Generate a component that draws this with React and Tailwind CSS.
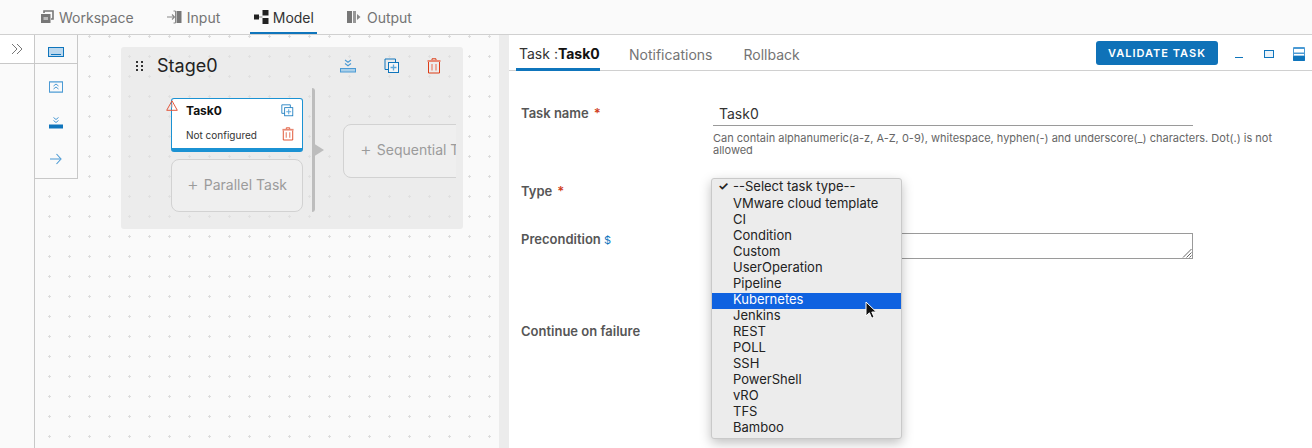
const FONT = "font-['Inter','Liberation_Sans',sans-serif]";

function DupIcon({ className = "" }) {
  return (
    <svg viewBox="0 0 16 16" className={className} fill="none">
      <path d="M4.5 11.5H1V1h10.5v3.5" stroke="#0f75bc" strokeWidth="1" transform="translate(0 0)" />
      <rect x="4.5" y="4.5" width="10" height="10" fill="#fff" fillOpacity="0.5" stroke="#0f75bc" strokeWidth="1" />
      <path d="M9.5 6.5v6M6.5 9.5h6" stroke="#5da7da" strokeWidth="1.3" />
    </svg>
  );
}
function TrashIcon({ className = "" }) {
  return (
    <svg viewBox="0 0 14 16" className={className} fill="none">
      <path d="M0.5 3h13" stroke="#e88873" strokeWidth="2" />
      <path d="M5 2V0.8h4V2" stroke="#dc3c16" strokeWidth="1" />
      <path d="M1.5 4v11h11V4" stroke="#dc3c16" strokeWidth="1" />
      <path d="M5 6v6.5M9 6v6.5" stroke="#eb9a87" strokeWidth="1.6" />
    </svg>
  );
}
function DownBarIcon({ className = "" }) {
  return (
    <svg viewBox="0 0 16 14" className={className} fill="none">
      <path d="M5 1l3 2.2L11 1M5 4.5l3 2.2 3-2.2" stroke="#4b9ad4" strokeWidth="1.1" />
      <rect x="0.5" y="9.5" width="15" height="3.5" fill="#a9cfe9" stroke="#4b9ad4" strokeWidth="1" />
    </svg>
  );
}
function WorkspaceIcon() {
  return (
    <svg viewBox="0 0 14 14" className="h-[14px] w-[14px]" fill="none">
      <path d="M4 3V1h9v8h-2" stroke="#777" strokeWidth="1.6" />
      <rect x="1" y="4" width="9.5" height="9" fill="#777" />
      <rect x="3.5" y="7" width="4.5" height="3" fill="#bbb" />
    </svg>
  );
}
function InputIcon() {
  return (
    <svg viewBox="0 0 15 14" className="h-[14px] w-[15px]" fill="none">
      <path d="M0 7h7M5 4.5L7.5 7 5 9.5" stroke="#888" strokeWidth="1.1" />
      <path d="M6.5 1h2v12h-2" stroke="#888" strokeWidth="1" />
      <rect x="9.5" y="1" width="5" height="12" fill="#777" />
    </svg>
  );
}
function ModelIcon() {
  return (
    <svg viewBox="0 0 15 14" className="h-[14px] w-[15px]" fill="#222">
      <rect x="0" y="4.5" width="5" height="5" />
      <rect x="8.5" y="0" width="6" height="5.5" />
      <rect x="8.5" y="8" width="6" height="6" />
      <path d="M5 7h3.5" stroke="#888" />
    </svg>
  );
}
function OutputIcon() {
  return (
    <svg viewBox="0 0 15 14" className="h-[14px] w-[15px]" fill="none">
      <rect x="0" y="1" width="5" height="12" fill="#777" />
      <rect x="6" y="1" width="3" height="12" fill="#999" />
      <path d="M10 4l3.5 3L10 10z" fill="#888" />
    </svg>
  );
}

function TopTab({ icon, label, active, className = "" }) {
  return (
    <div
      className={`flex h-[34px] items-center border-b-[2px] pt-[2px] text-[14px] ${
        active ? "border-[#0f75bc] text-[#333]" : "border-transparent text-[#747474]"
      } ${className}`}
    >
      {icon}
      <span>{label}</span>
    </div>
  );
}

const OPTIONS = [
  "VMware cloud template", "CI", "Condition", "Custom", "UserOperation", "Pipeline",
  "Kubernetes", "Jenkins", "REST", "POLL", "SSH", "PowerShell", "vRO", "TFS", "Bamboo",
];

function Dropdown() {
  return (
    <div className="absolute left-[711px] top-[178px] z-20 w-[191px] rounded-[3px] border border-[#c9c9c9] bg-[#ececec] pt-[2px] pb-[1px] text-[13px] leading-[12px] text-[#222] shadow-[0_4px_12px_rgba(0,0,0,0.25)]">
      <div className="relative -mt-[1px] h-[17px] pl-[21px]">
        <span className="absolute left-[6px] top-0 text-[12px] font-bold">✓</span>
        --Select task type--
      </div>
      {OPTIONS.map((o) => (
        <div key={o} className={`h-[16px] pl-[21px] ${o === "Kubernetes" ? "bg-[#0f62e0] text-white" : ""}`}>
          {o}
        </div>
      ))}
      <svg viewBox="0 0 12 19" className="absolute left-[153px] top-[122px] h-[19px] w-[12px]">
        <path d="M1 1v14l3.4-3.2 2.3 5.4 2.4-1-2.3-5.2h4.6z" fill="#111" stroke="#fff" strokeWidth="1" />
      </svg>
    </div>
  );
}

function Canvas() {
  return (
    <div className="flex w-[464px] shrink-0 items-start bg-[#fafafa] bg-[radial-gradient(circle_at_14.5px_1.5px,#dcdcdc_1.2px,transparent_1.4px)] bg-[length:20px_20px]">
      <div className="h-[144px] w-[43px] shrink-0 border-r border-b border-[#c8c8c8] bg-[#fafafa]">
        <div className="flex h-[29px] items-center justify-center border-b border-[#c8c8c8] pt-[5px]">
          <svg viewBox="0 0 16 10" className="h-[10px] w-[16px]" fill="none">
            <rect x="0.5" y="0.5" width="15" height="9" fill="#bcd8ee" stroke="#0f75bc" />
            <path d="M3 7.5h10" stroke="#0f75bc" />
          </svg>
        </div>
        <div className="flex flex-col items-center gap-[24px] pt-[17px]">
          <svg viewBox="0 0 14 12" className="h-[12px] w-[14px]" fill="none">
            <path d="M0 0.5h14M0 11.5h14" stroke="#a9cfe9" />
            <rect x="0.5" y="1" width="13" height="10" stroke="#4b9ad4" />
            <path d="M4.5 5l2.5-2 2.5 2M4.5 8l2.5-2 2.5 2" stroke="#4b9ad4" />
          </svg>
          <svg viewBox="0 0 14 12" className="h-[12px] w-[14px]" fill="none">
            <path d="M4.5 0.5L7 2.5l2.5-2M4.5 3.5L7 5.5l2.5-2" stroke="#4b9ad4" />
            <rect x="0" y="7.5" width="14" height="4" fill="#0f75bc" />
          </svg>
          <svg viewBox="0 0 12 12" className="h-[12px] w-[12px]" fill="none">
            <path d="M0 6h10" stroke="#7ab4de" strokeWidth="1.4" />
            <path d="M6.5 1L11 6l-4.5 5" stroke="#4b9ad4" strokeWidth="1.1" />
          </svg>
        </div>
      </div>
      <div className="mt-[12px] ml-[43px] h-[182px] w-[342px] shrink-0 rounded-[3px] bg-[#e3e3e3]/60">
        <div className="flex h-[38px] items-center pl-[15px]">
          <div className="grid w-[8px] grid-cols-2 gap-[2px]">
            {[0, 1, 2, 3, 4, 5].map((i) => (
              <span key={i} className="h-[2px] w-[2px] bg-[#333]" />
            ))}
          </div>
          <span className="ml-[13px] -mt-[1px] text-[18px] text-[#222]">Stage0</span>
          <DownBarIcon className="ml-[122px] h-[14px] w-[16px]" />
          <DupIcon className="ml-[28px] h-[16px] w-[16px]" />
          <TrashIcon className="ml-[27px] h-[16px] w-[14px]" />
        </div>
        <div className="flex w-[335px] overflow-hidden pl-[50px] pt-[3px]">
          <div className="flex w-[132px] shrink-0 flex-col gap-[7px] pt-[10px]">
            <div className="relative h-[54px] rounded-[3px] border border-b-[4px] border-[#1b92d3] bg-white pl-[14px]">
              <svg viewBox="0 0 12 11" className="absolute -left-[6px] top-[1px] h-[11px] w-[12px]" fill="none">
                <path d="M6 0.8L11.3 10.3H0.7z" stroke="#e2573c" strokeWidth="1" />
                <path d="M6 3.5v4" stroke="#f0a090" />
              </svg>
              <div className="pt-[3px] text-[12px] font-bold leading-[18px] text-[#111]">Task0</div>
              <div className="mt-[8px] text-[10px] leading-[14px] text-[#333]">Not configured</div>
              <DupIcon className="absolute right-[8px] top-[5px] h-[13px] w-[13px]" />
              <TrashIcon className="absolute right-[8px] top-[28px] h-[14px] w-[12px]" />
            </div>
            <div className="flex h-[53px] items-center justify-center gap-[5px] rounded-[8px] border border-[#d2d2d2] bg-[#efefef] pb-[2px] text-[14px] text-[#9b9b9b]">
              <span className="text-[18px] font-light">+</span>
              <span>Parallel Task</span>
            </div>
          </div>
          <div className="relative ml-[9px] h-[124px] w-[3px] shrink-0 rounded-r-[3px] bg-[#bdbdbd]">
            <div className="absolute left-[1px] top-[55px] h-0 w-0 border-y-[7px] border-l-[11px] border-y-transparent border-l-[#bdbdbd]" />
          </div>
          <div className="ml-[28px] mt-[36px] flex h-[54px] w-[150px] shrink-0 items-center gap-[5px] rounded-[8px] border border-[#d2d2d2] bg-[#efefef] pb-[3px] pl-[16px] text-[14px] text-[#9b9b9b] whitespace-nowrap">
            <span className="text-[18px] font-light">+</span>
            <span>Sequential Task</span>
          </div>
        </div>
      </div>
    </div>
  );
}

function Label({ children, star, className = "" }) {
  return (
    <div className={`w-[192px] shrink-0 text-[13px] font-semibold leading-[16px] text-[#565656] ${className}`}>
      {children}
      {star && <span className="ml-[5px] text-[#d0401c]">*</span>}
    </div>
  );
}

function RightPanel() {
  return (
    <div className="min-w-0 flex-1 bg-white">
      <div className="flex h-[36px] items-center border-b border-[#d0d0d0] pl-[7px]">
        <div className="flex h-[36px] w-[84px] items-center border-b-[3px] border-[#0f75bc] pl-[3px] pt-[4px] text-[14px] text-[#333]">
          Task :<b className="text-[#111]">Task0</b>
        </div>
        <div className="ml-[29px] pt-[3px] text-[14px] text-[#747474]">Notifications</div>
        <div className="ml-[31px] pt-[3px] text-[14px] text-[#747474]">Rollback</div>
        <div className="ml-auto mt-[1px] flex h-[24px] w-[122px] items-center justify-center rounded-[3px] bg-[#0f72b8] text-[11px] font-semibold tracking-[1px] text-white">
          VALIDATE TASK
        </div>
        <div className="ml-[17px] mt-[10px] h-[1px] w-[8px] self-center bg-[#0f75bc]" />
        <div className="ml-[21px] mt-[2px] h-[8px] w-[10px] border border-[#0f75bc] bg-[#eaf3fa]" />
        <svg viewBox="0 0 12 14" className="ml-[19px] mr-[7px] mt-[2px] h-[14px] w-[12px]" fill="none">
          <rect x="0" y="0" width="12" height="14" rx="1" fill="#4b9ad4" />
          <rect x="1" y="2" width="10" height="3.5" fill="#fff" />
          <rect x="1" y="7" width="10" height="1.5" fill="#fff" />
          <rect x="0" y="9" width="12" height="5" rx="1" fill="#0f75bc" />
        </svg>
      </div>
      <div className="pl-[12px] pr-[38px]">
        <div className="flex pt-[34px]">
          <Label star>Task name</Label>
          <div className="min-w-0 flex-1">
            <div className="h-[21px] w-[480px] border-b border-[#9a9a9a] pl-[6px] text-[14px] leading-[18px] text-[#333]">Task0</div>
            <div className="mt-[6px] text-[11px] leading-[12px] text-[#666]">
              Can contain alphanumeric(a-z, A-Z, 0-9), whitespace, hyphen(-) and underscore(_) characters. Dot(.) is not allowed
            </div>
          </div>
        </div>
        <div className="flex pt-[27px]">
          <Label star>Type</Label>
        </div>
        <div className="flex pt-[32px]">
          <Label>
            Precondition <span className="text-[11px] font-normal text-[#0f75bc]">$</span>
          </Label>
          <div className="relative mt-[2px] h-[26px] w-[480px] border border-[#9a9a9a] border-l-transparent">
            <svg viewBox="0 0 10 10" className="absolute bottom-0 right-0 h-[10px] w-[10px]" fill="none">
              <path d="M1 9.5L9.5 1M4.5 9.5l5-5M7.5 9.5l2-2" stroke="#666" strokeWidth="1" />
            </svg>
          </div>
        </div>
        <div className="flex pt-[64px]">
          <Label>Continue on failure</Label>
        </div>
      </div>
    </div>
  );
}

export default function App() {
  return (
    <div className={`relative h-[448px] w-[1312px] overflow-hidden bg-[#fafafa] ${FONT}`}>
      <div className="flex h-[35px] items-start border-b border-[#d0d0d0] bg-[#fafafa] pl-[40px]">
        <TopTab icon={<WorkspaceIcon />} label="Workspace" className="gap-[5px]" />
        <TopTab icon={<InputIcon />} label="Input" className="ml-[33px] gap-[5px]" />
        <TopTab icon={<ModelIcon />} label="Model" active className="ml-[29.5px] gap-[4px] pl-[4px] pr-[3px]" />
        <TopTab icon={<OutputIcon />} label="Output" className="ml-[30px] gap-[5px]" />
      </div>
      <div className="flex h-[413px]">
        <div className="w-[35px] shrink-0 border-r border-[#c8c8c8]">
          <div className="flex h-[29px] items-center justify-center border-b border-[#c8c8c8] bg-white">
            <svg viewBox="0 0 12 12" className="h-[12px] w-[12px]" fill="none" stroke="#777" strokeWidth="1">
              <path d="M1 1l5 5-5 5M6 1l5 5-5 5" />
            </svg>
          </div>
        </div>
        <Canvas />
        <div className="w-[10px] shrink-0 bg-[#ececec]" />
        <RightPanel />
      </div>
      <Dropdown />
    </div>
  );
}
